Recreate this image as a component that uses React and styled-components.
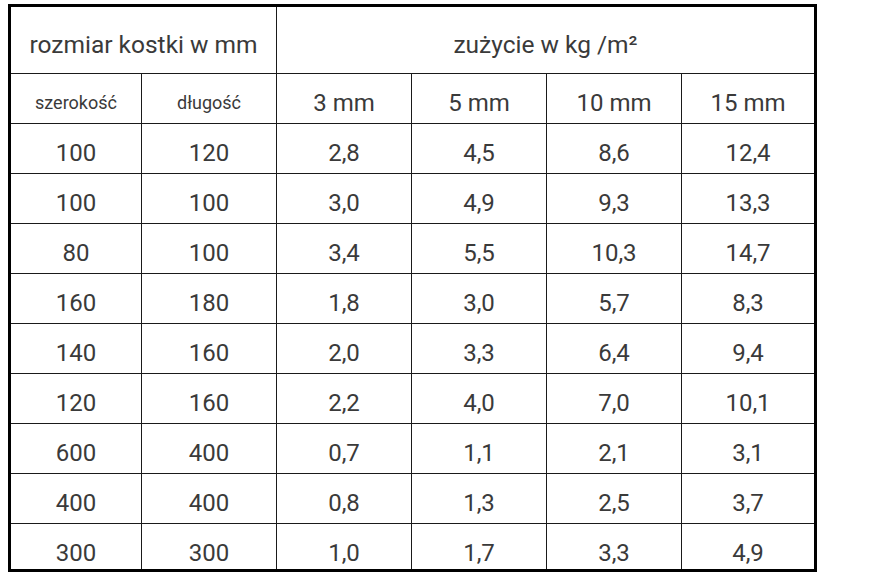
import React from "react";
import styled, { createGlobalStyle } from "styled-components";

const Global = createGlobalStyle`
  html, body { margin: 0; padding: 0; background: #ffffff; }
  body { font-family: Roboto, "Noto Sans", "Liberation Sans", sans-serif; }
`;

const Page = styled.div`
  padding: 4px 0 0 8px;
`;

const Grid = styled.div`
  box-sizing: border-box;
  width: 809px;
  height: 568px;
  border: 3px solid #000;
  display: grid;
  grid-template-columns: 131px 135px 135px 135px 135px 132px;
  grid-template-rows: 67px 50px repeat(8, 50px) 45px;
  color: #3a3a3a;
`;

const Cell = styled.div`
  box-sizing: border-box;
  display: flex;
  align-items: center;
  justify-content: center;
  padding-top: ${(p) => (p.$lastRow ? 12 : 8)}px;
  grid-column: span ${(p) => p.$span || 1};
  border-right: ${(p) => (p.$lastCol ? "none" : "1px solid #1a1a1a")};
  border-bottom: ${(p) => (p.$lastRow ? "none" : "1px solid #1a1a1a")};
  font-size: ${(p) => p.$size || 24}px;
  white-space: nowrap;
`;

const columns = ["3 mm", "5 mm", "10 mm", "15 mm"];

const rows = [
  ["100", "120", "2,8", "4,5", "8,6", "12,4"],
  ["100", "100", "3,0", "4,9", "9,3", "13,3"],
  ["80", "100", "3,4", "5,5", "10,3", "14,7"],
  ["160", "180", "1,8", "3,0", "5,7", "8,3"],
  ["140", "160", "2,0", "3,3", "6,4", "9,4"],
  ["120", "160", "2,2", "4,0", "7,0", "10,1"],
  ["600", "400", "0,7", "1,1", "2,1", "3,1"],
  ["400", "400", "0,8", "1,3", "2,5", "3,7"],
  ["300", "300", "1,0", "1,7", "3,3", "4,9"],
];

export default function App() {
  return (
    <Page>
      <Global />
      <Grid>
        <Cell $span={2} $size={24.5}>
          rozmiar kostki w mm
        </Cell>
        <Cell $span={4} $lastCol $size={24.5}>
          zużycie w kg /m²
        </Cell>
        <Cell $size={18}>szerokość</Cell>
        <Cell $size={18}>długość</Cell>
        {columns.map((c, i) => (
          <Cell key={c} $lastCol={i === columns.length - 1}>
            {c}
          </Cell>
        ))}
        {rows.map((r, ri) =>
          r.map((v, ci) => (
            <Cell
              key={`${ri}-${ci}`}
              $lastCol={ci === r.length - 1}
              $lastRow={ri === rows.length - 1}
            >
              {v}
            </Cell>
          ))
        )}
      </Grid>
    </Page>
  );
}
